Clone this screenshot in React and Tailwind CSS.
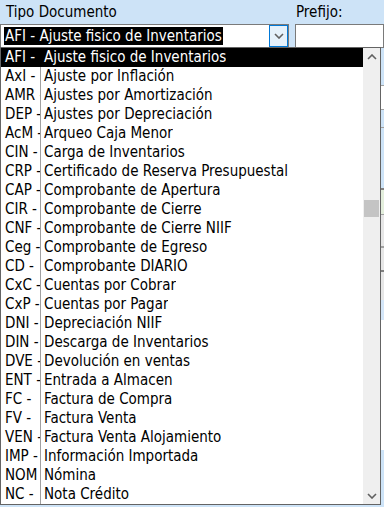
import React from "react";

const items = [
  ["AFI -", "Ajuste fisico de Inventarios"],
  ["AxI -", "Ajuste por Inflación"],
  ["AMR -", "Ajustes por Amortización"],
  ["DEP -", "Ajustes por Depreciación"],
  ["AcM -", "Arqueo Caja Menor"],
  ["CIN -", "Carga de Inventarios"],
  ["CRP -", "Certificado de Reserva Presupuestal"],
  ["CAP -", "Comprobante de Apertura"],
  ["CIR -", "Comprobante de Cierre"],
  ["CNF -", "Comprobante de Cierre NIIF"],
  ["Ceg -", "Comprobante de Egreso"],
  ["CD -", "Comprobante DIARIO"],
  ["CxC -", "Cuentas por Cobrar"],
  ["CxP -", "Cuentas por Pagar"],
  ["DNI -", "Depreciación NIIF"],
  ["DIN -", "Descarga de Inventarios"],
  ["DVE -", "Devolución en ventas"],
  ["ENT -", "Entrada a Almacen"],
  ["FC -", "Factura de Compra"],
  ["FV -", "Factura Venta"],
  ["VEN -", "Factura Venta Alojamiento"],
  ["IMP -", "Información Importada"],
  ["NOM -", "Nómina"],
  ["NC -", "Nota Crédito"],
];

const font = { fontFamily: "'DejaVu Sans Condensed', 'DejaVu Sans', sans-serif" };

function Chevron({ up }) {
  return (
    <svg width="10" height="6" viewBox="0 0 10 6">
      <path
        d={up ? "M1 5 L5 1 L9 5" : "M1 1 L5 5 L9 1"}
        fill="none"
        stroke="#606060"
        strokeWidth="1.6"
      />
    </svg>
  );
}

export default function App() {
  return (
    <div
      className="relative w-[384px] h-[507px] overflow-hidden bg-[#cde3f7] text-[15px] leading-[19px] text-black"
      style={font}
    >
      {/* labels */}
      <div className="flex h-[24px] items-center">
        <div className="w-[295px] pl-[6px]">Tipo Documento</div>
        <div className="pl-[1px]">Prefijo:</div>
      </div>
      {/* inputs */}
      <div className="flex h-[24px]">
        <div className="flex w-[289px] border border-[#7a7a7a] bg-white">
          <div className="flex flex-1 items-center pl-[3px]">
            <span className="bg-black text-white px-[1px] leading-[18px]">AFI - Ajuste fisico de Inventarios</span>
          </div>
          <div className="flex w-[19px] items-center justify-center border border-[#0078d7] bg-[#e5f1fb]">
            <Chevron />
          </div>
        </div>
        <div className="ml-[6px] flex-1 border border-[#7a7a7a] bg-white"></div>
      </div>
      {/* underlying content */}
      <div className="flex flex-col">
        <div className="h-[20px]"></div>
        <div className="h-[18px] border-b border-[#a0a0a0]"></div>
        <div className="h-[24px] bg-white border-b border-[#a0a0a0]"></div>
        <div className="h-[18px] border-b border-[#a0a0a0]"></div>
        <div className="h-[60px] bg-[#cde3f7]"></div>
        <div className="h-[26px] bg-[#e3eedc] border-t-2 border-[#808080]"></div>
        <div className="h-[32px] bg-[#e6e6e6] border-t border-[#a0a0a0]"></div>
        <div className="h-[24px] bg-[#e6e6e6] border-t-2 border-[#a0a0a0]"></div>
        <div className="h-[30px] bg-[#e6e6e6] border-t-2 border-[#808080]"></div>
        <div className="h-[20px] bg-[#d4e6f8]"></div>
        <div className="h-[130px] bg-white"></div>
      </div>

      {/* dropdown list overlay */}
      <div className="absolute left-0 top-[47px] flex w-[381px] h-[458px] border border-[#646464] bg-white">
        <div className="flex-1 flex flex-col overflow-hidden">
          {items.map(([code, desc], i) => {
            const sel = i === 0;
            return (
              <div
                key={code + desc}
                className={
                  "flex h-[19px] shrink-0 " + (sel ? "bg-black text-white" : "")
                }
              >
                <div
                  className={
                    "w-[40px] shrink-0 overflow-hidden whitespace-nowrap pl-[4px] " +
                    (sel ? "" : "border-r border-[#a0a0a0]")
                  }
                >
                  {code}
                </div>
                <div className="pl-[3px] whitespace-nowrap overflow-hidden">{desc}</div>
              </div>
            );
          })}
        </div>
        <div className="flex w-[17px] flex-col bg-[#efefef]">
          <div className="flex h-[17px] items-center justify-center">
            <Chevron up />
          </div>
          <div className="h-[135px]"></div>
          <div className="h-[17px] mx-[1px] bg-[#c4c4c4]"></div>
          <div className="flex-1"></div>
          <div className="flex h-[17px] items-center justify-center">
            <Chevron />
          </div>
        </div>
      </div>
    </div>
  );
}
